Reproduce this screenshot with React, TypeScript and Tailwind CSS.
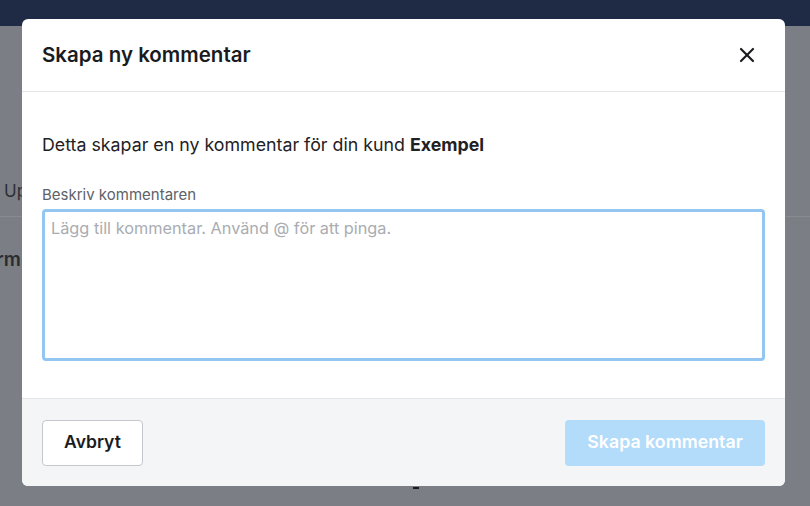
import { X } from 'lucide-react'

export default function App() {
  return (
    <div className="relative h-[506px] w-[810px] overflow-hidden bg-[#7b7e84] font-['Inter',sans-serif]">
      {/* page behind the overlay */}
      <div className="h-[26px] bg-[#1f2a44]" />
      <div className="pt-[153px] pl-[4px] text-[17px] text-[#2e3034]">Up</div>
      <div className="mt-[11px] border-t border-[#888b90]" />
      <div className="pt-[29px] text-[19px] font-semibold text-[#2a2c30] -ml-[4px]">rm</div>

      {/* modal */}
      <div className="absolute left-[22px] top-[19px] w-[763px] overflow-hidden rounded-md bg-white">
        <div className="flex h-[73px] items-center justify-between border-b border-[#e3e5e8] pl-[20px] pr-[26px]">
          <h2 className="text-[20.5px] font-semibold text-[#1a1b1e]">Skapa ny kommentar</h2>
          <X size={24} strokeWidth={2.2} className="text-[#1a1b1e]" />
        </div>
        <div className="px-[20px] pt-[40px] pb-[37px]">
          <p className="text-[17.8px] leading-[26px] text-[#1f2124]">
            Detta skapar en ny kommentar för din kund <span className="font-bold">Exempel</span>
          </p>
          <label className="mt-[26px] block text-[15px] leading-[22px] text-[#5d6168]">Beskriv kommentaren</label>
          <textarea
            placeholder="Lägg till kommentar. Använd @ för att pinga."
            className="mt-[3px] block h-[152px] w-full resize-none rounded border-[3px] border-[#93c7f2] px-[6px] py-[4px] text-[16.3px] text-[#1f2124] outline-none placeholder:text-[#a9acb1]"
          />
        </div>
        <div className="flex h-[88px] items-center justify-between border-t border-[#e3e5e8] bg-[#f4f5f7] px-[20px]">
          <button className="h-[46px] w-[101px] rounded border border-[#c4c7cc] bg-white text-[17.5px] font-semibold text-[#1a1b1e]">
            Avbryt
          </button>
          <button className="h-[46px] w-[200px] rounded bg-[#b3dbfa] text-[17.8px] font-semibold text-white">
            Skapa kommentar
          </button>
        </div>
      </div>
      <div className="absolute left-[413px] top-[487px] h-[2px] w-[6px] bg-[#1a1b1e]" />
    </div>
  )
}
